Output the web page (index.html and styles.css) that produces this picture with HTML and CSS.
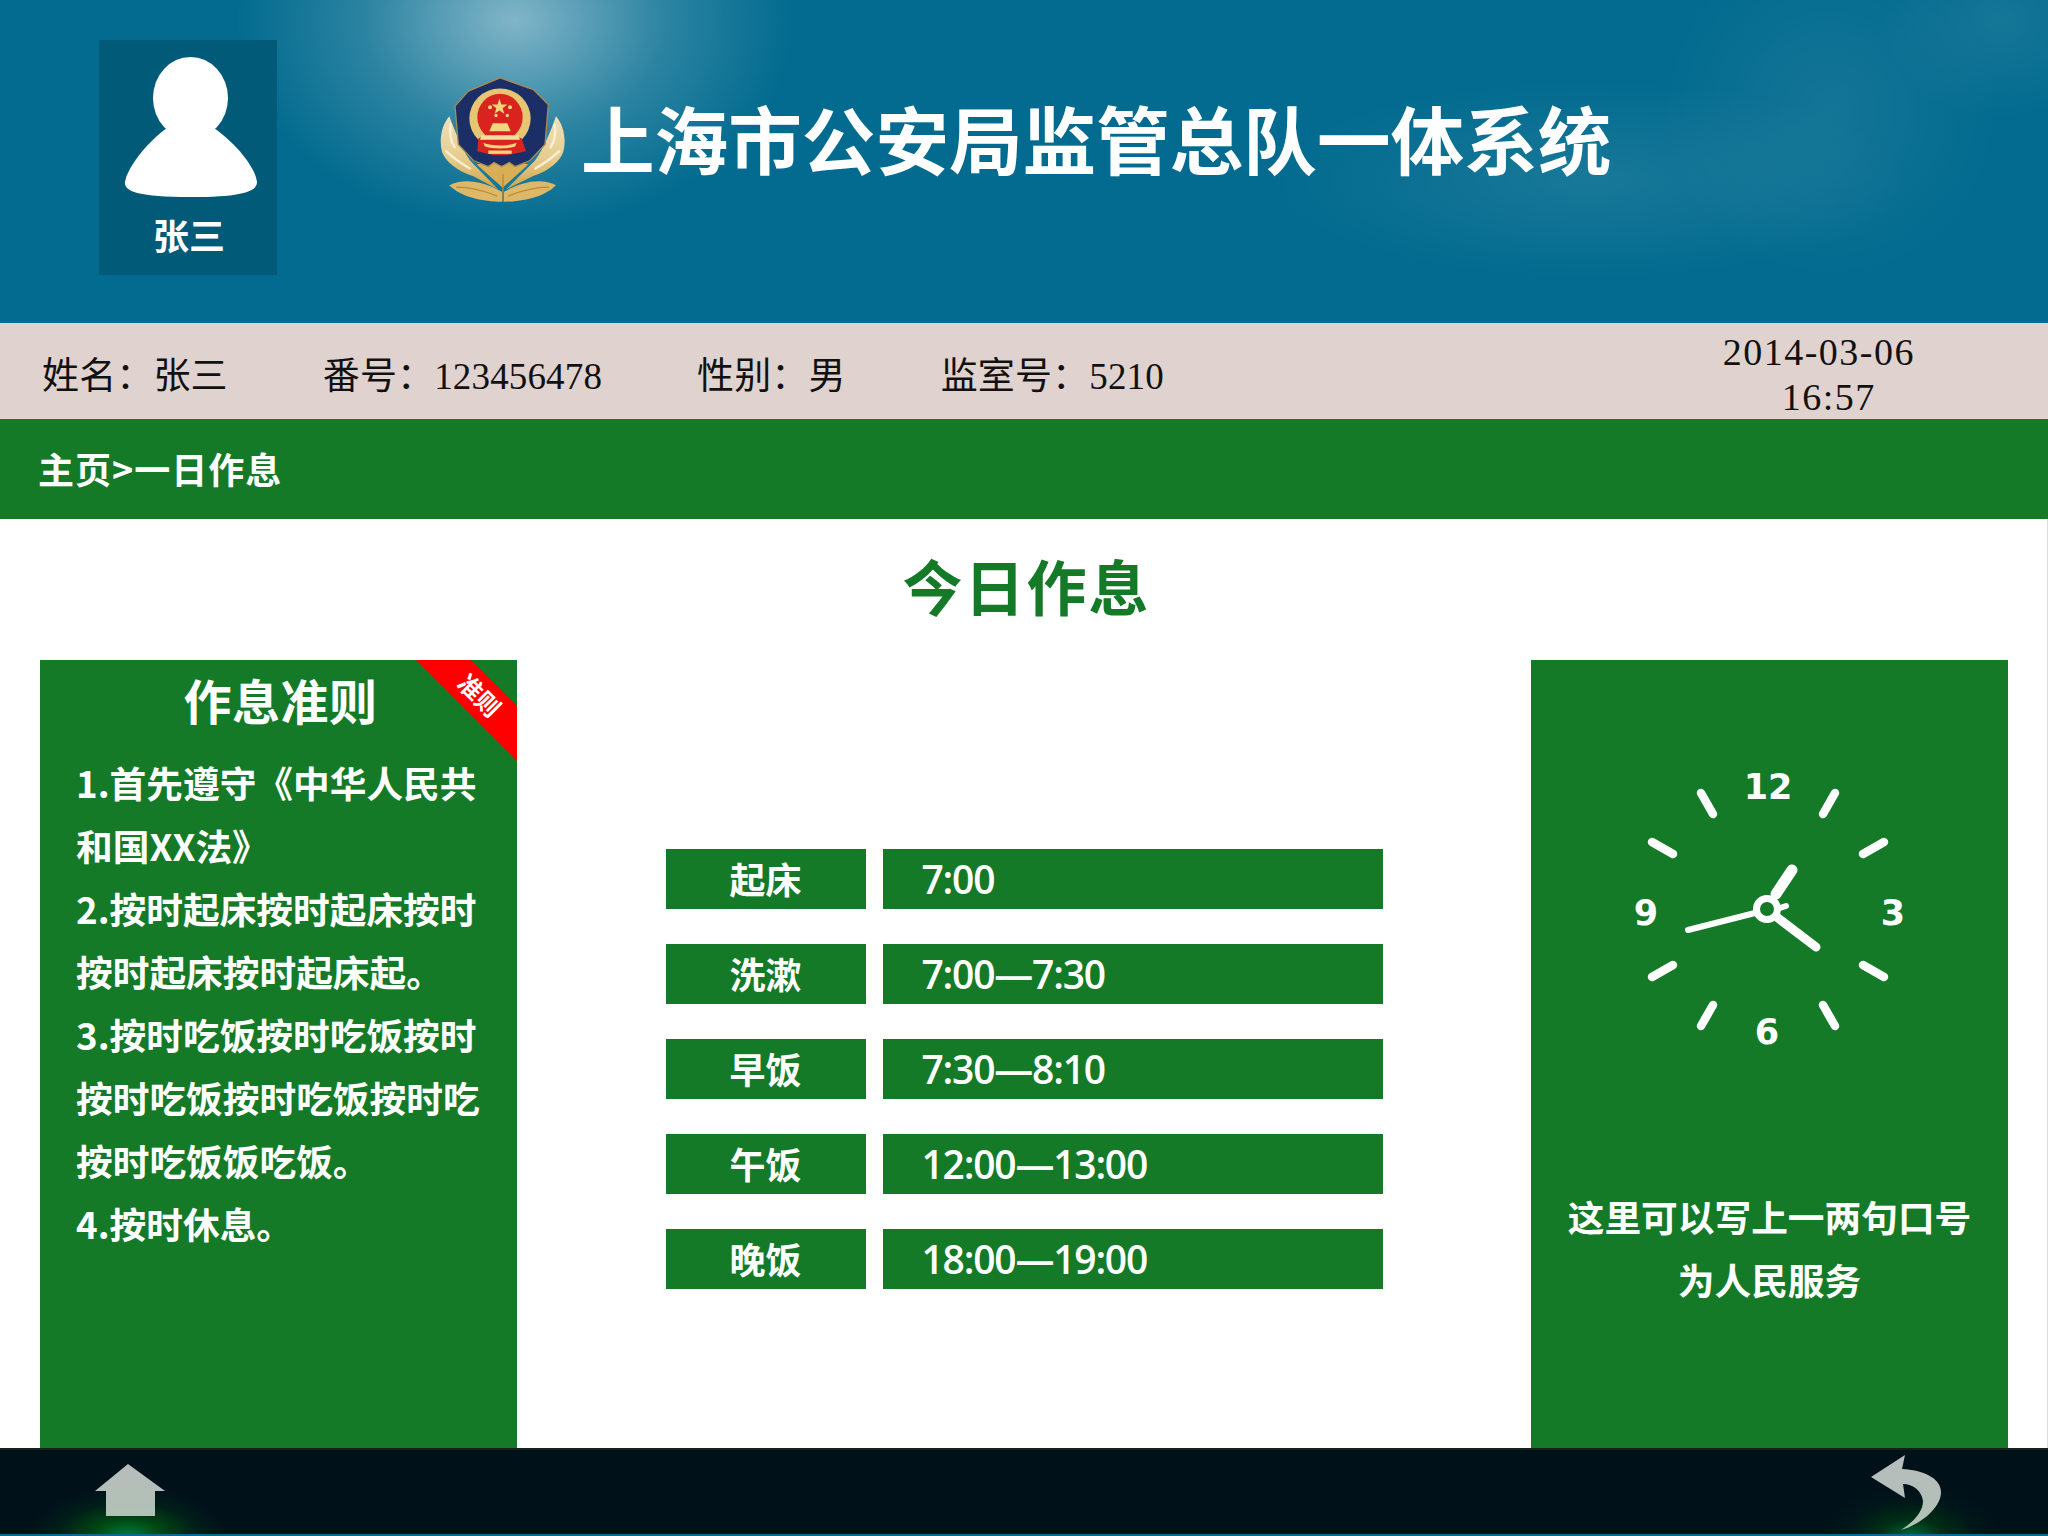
FILE: index.html
```html
<!DOCTYPE html>
<html>
<head>
<meta charset="utf-8">
<title>上海市公安局监管总队一体系统</title>
<link rel="stylesheet" href="styles.css">
</head>
<body>
<div class="page">
	<div class="header">
		<div class="avatar">
			<svg class="avatar-pic" viewBox="0 0 178 160">
				<ellipse cx="91.5" cy="58" rx="37.5" ry="41" fill="#fff"/>
				<path d="M68 88C48 102 28 128 26 142C25 151 38 157 91 157C145 157 158 151 158 142C156 126 135 102 115 88Z" fill="#fff"/>
			</svg>
			<div class="avatar-name">张三</div>
		</div>
		<svg class="badge" viewBox="60 45 375 380">
			<defs>
				<linearGradient id="gold" x1="0" y1="0" x2="0" y2="1">
					<stop offset="0" stop-color="#f0e2bc"/>
					<stop offset="0.6" stop-color="#e6cb8a"/>
					<stop offset="1" stop-color="#cfa148"/>
				</linearGradient>
			</defs>
			<path d="M88 165C66 190 56 232 66 272C74 298 110 330 160 345L235 385L150 298C125 260 105 210 88 165Z" fill="url(#gold)"/>
			<path d="M408 165C430 190 440 232 430 272C422 298 388 330 338 345L258 385L345 298C372 260 392 210 408 165Z" fill="url(#gold)"/>
			<path d="M88 372C130 350 190 360 246 392L246 422C190 420 125 410 88 372Z" fill="#dcb868"/>
			<path d="M408 372C366 350 306 360 252 392L252 422C306 420 371 410 408 372Z" fill="#dcb868"/>
			<path d="M170 310L210 300L245 295L285 300L325 310L248 380Z" fill="#d8ae56"/>
			<g stroke="#f8f0d8" stroke-width="7" stroke-linecap="round" fill="none">
				<path d="M92 190C88 215 92 240 104 258"/>
				<path d="M78 270C100 290 125 308 150 322"/>
				<path d="M404 190C408 215 404 240 392 258"/>
				<path d="M418 270C396 290 371 308 346 322"/>
			</g>
			<g stroke="#b98c36" stroke-width="4" stroke-linecap="round" fill="none">
				<path d="M110 378C150 378 190 388 230 404"/>
				<path d="M386 378C346 378 306 388 266 404"/>
				<path d="M249 340V420"/>
			</g>
			<path d="M240 50L340 85L385 130L375 250L330 298L285 316L268 304L245 316L222 304L205 316L160 298L115 250L105 135L145 90Z" fill="#1b2f66" stroke="#a98a55" stroke-width="4"/>
			<ellipse cx="240" cy="172" rx="92" ry="90" fill="#e6c673"/>
			<ellipse cx="240" cy="168" rx="68" ry="70" fill="#d8231f"/>
			<path d="M175 232L205 218H275L305 232L318 270L260 282H220L172 270Z" fill="#d8231f"/>
			<path d="M238 112L244 130L262 130L248 141L253 158L238 148L224 158L229 141L215 130L233 130Z" fill="#f0d67e"/>
			<circle cx="210" cy="138" r="6" fill="#f0d67e"/>
			<circle cx="270" cy="138" r="6" fill="#f0d67e"/>
			<circle cx="228" cy="163" r="5" fill="#f0d67e"/>
			<circle cx="262" cy="163" r="5" fill="#f0d67e"/>
			<path d="M218 186H262L272 210H208Z" fill="#f0d67e"/>
			<path d="M185 222H295L300 236H180Z" fill="#f0e0a0"/>
			<path d="M190 245C215 256 265 256 290 245L286 255C265 264 215 264 194 255Z" fill="#f0d67e"/>
			<path d="M205 268H275V278H205Z" fill="#f0d67e"/>
		</svg>
		<h1 class="site-title">上海市公安局监管总队一体系统</h1>
	</div>

	<div class="info">
		<span class="info-item">姓名：张三</span>
		<span class="info-item">番号：123456478</span>
		<span class="info-item">性别：男</span>
		<span class="info-item">监室号：5210</span>
		<div class="datetime">
			<div>2014-03-06</div>
			<div class="time">16:57</div>
		</div>
	</div>

	<div class="crumb">主页&gt;一日作息</div>

	<div class="main">
		<h2 class="main-title">今日作息</h2>
		<div class="columns">
			<div class="panel rules">
				<div class="ribbon"><span>准则</span></div>
				<h3 class="rules-title">作息准则</h3>
				<p>1.首先遵守《中华人民共和国XX法》</p>
				<p>2.按时起床按时起床按时按时起床按时起床起。</p>
				<p>3.按时吃饭按时吃饭按时按时吃饭按时吃饭按时吃按时吃饭饭吃饭。</p>
				<p>4.按时休息。</p>
			</div>

			<div class="schedule">
				<div class="row"><div class="row-name">起床</div><div class="row-time">7:00</div></div>
				<div class="row"><div class="row-name">洗漱</div><div class="row-time">7:00—7:30</div></div>
				<div class="row"><div class="row-name">早饭</div><div class="row-time">7:30—8:10</div></div>
				<div class="row"><div class="row-name">午饭</div><div class="row-time">12:00—13:00</div></div>
				<div class="row"><div class="row-name">晚饭</div><div class="row-time">18:00—19:00</div></div>
			</div>

			<div class="panel slogan">
				<svg class="clock" viewBox="0 0 400 340">
					<g stroke="#fff" stroke-width="8.5" stroke-linecap="round">
						<line x1="243" y1="74" x2="255" y2="53"/>
						<line x1="283" y1="114" x2="304" y2="102"/>
						<line x1="283" y1="225" x2="304" y2="237"/>
						<line x1="243" y1="265" x2="255" y2="286"/>
						<line x1="133" y1="265" x2="121" y2="286"/>
						<line x1="93" y1="225" x2="72" y2="237"/>
						<line x1="93" y1="114" x2="72" y2="102"/>
						<line x1="133" y1="74" x2="121" y2="53"/>
					</g>
					<g fill="#fff" class="clock-num" text-anchor="middle">
						<text x="188" y="59">12</text>
						<text x="313" y="185">3</text>
						<text x="187" y="304">6</text>
						<text x="66" y="185">9</text>
					</g>
					<g stroke="#fff" stroke-linecap="round">
						<line x1="196" y1="154" x2="212" y2="130" stroke-width="11"/>
						<line x1="198" y1="178" x2="236" y2="207" stroke-width="9"/>
						<line x1="175" y1="173" x2="108" y2="190" stroke-width="6"/>
						<line x1="200" y1="168" x2="206" y2="166" stroke-width="6"/>
					</g>
					<circle cx="187" cy="169" r="10.5" fill="#147a28" stroke="#fff" stroke-width="7"/>
				</svg>
				<p>这里可以写上一两句口号</p>
				<p>为人民服务</p>
			</div>
		</div>
	</div>

	<div class="footer">
		<svg class="home-icon" viewBox="0 0 70 52">
			<defs>
				<linearGradient id="iconfill" x1="0" y1="0" x2="0" y2="1">
					<stop offset="0" stop-color="#b7bcbc"/>
					<stop offset="1" stop-color="#b0c2b6"/>
				</linearGradient>
			</defs>
			<path d="M33 0L70 27H60V52H11V27H0Z" fill="url(#iconfill)"/>
		</svg>
		<svg class="back-icon" viewBox="0 0 70 75">
			<path d="M0 22L34 0L31 14C52 15 70 23 70 37C70 53 50 69 30 75C44 66 52 56 52 46C51 36 42 29 32 29L34 43Z" fill="url(#iconfill)"/>
		</svg>
	</div>
</div>
</body>
</html>
```

FILE: styles.css
```css
*{
	margin: 0;
	padding: 0;
	box-sizing: border-box;
}
body{
	width: 2048px;
	height: 1536px;
	overflow: hidden;
	background-color: #fff;
	font-family: "Noto Sans CJK SC", sans-serif;
}
.page{
	display: flex;
	flex-direction: column;
	height: 1536px;
}

.header{
	display: flex;
	align-items: flex-start;
	height: 323px;
	padding: 40px 0 0 99px;
	background-color: #026b8f;
	background-image:
		radial-gradient(ellipse 280px 210px at 515px 20px, rgba(255,255,255,.5), rgba(255,255,255,.16) 55%, rgba(255,255,255,0)),
		radial-gradient(ellipse 320px 100px at 1590px 180px, rgba(255,255,255,.09), rgba(255,255,255,0)),
		radial-gradient(ellipse 170px 170px at 1830px 110px, rgba(255,255,255,.07), rgba(255,255,255,0)),
		radial-gradient(ellipse 120px 100px at 2000px 20px, rgba(255,255,255,.08), rgba(255,255,255,0));
}
.avatar{
	width: 178px;
	height: 235px;
	background-color: #005a78;
}
.avatar-pic{
	display: block;
	width: 178px;
	height: 160px;
}
.avatar-name{
	height: 72px;
	padding-left: 2px;
	line-height: 68px;
	text-align: center;
	font-size: 36px;
	font-weight: 700;
	color: #fff;
}
.badge{
	width: 125px;
	height: 127px;
	margin: 36px 0 0 163px;
	filter: blur(.4px);
}
.site-title{
	margin: 51px 0 0 16px;
	line-height: 92px;
	font-size: 73.6px;
	font-weight: 700;
	color: #fff;
	white-space: nowrap;
}

.info{
	display: flex;
	align-items: center;
	gap: 95px;
	height: 96px;
	padding: 3px 133px 0 42px;
	background-color: #e0d3cf;
	font-family: "Liberation Serif", "Noto Sans CJK SC", serif;
	font-size: 37px;
	letter-spacing: .15px;
	color: #111;
}
.datetime{
	margin-left: auto;
	margin-top: 5px;
	line-height: 45px;
	font-size: 38px;
	letter-spacing: 1.5px;
	text-align: center;
}
.time{
	padding-left: 20px;
}

.crumb{
	height: 100px;
	padding-left: 38px;
	line-height: 98px;
	background-color: #147a28;
	font-size: 36px;
	letter-spacing: 1px;
	font-weight: 700;
	color: #fff;
}

.main{
	display: flex;
	flex-direction: column;
	flex: 1;
	min-height: 0;
	border-right: 1px solid #ddd;
}
.main-title{
	height: 141px;
	padding-left: 6px;
	line-height: 131px;
	text-align: center;
	font-size: 60px;
	letter-spacing: 2px;
	font-weight: 700;
	color: #147a28;
}
.columns{
	display: flex;
	justify-content: space-between;
	flex: 1;
	padding: 0 39px 0 40px;
}
.panel{
	position: relative;
	width: 477px;
	overflow: hidden;
	background-color: #147a28;
	color: #fff;
	font-size: 36.7px;
	font-weight: 700;
	line-height: 63px;
}

.rules{
	padding: 0 27px 0 36px;
}
.rules-title{
	height: 91px;
	margin-left: -32px;
	margin-right: -27px;
	line-height: 78px;
	text-align: center;
	font-size: 48px;
	letter-spacing: .5px;
	font-weight: 700;
}
.ribbon{
	position: absolute;
	top: 0;
	right: 0;
	width: 101px;
	height: 101px;
	background-color: #f00;
	clip-path: polygon(0 0, 55px 0, 100% 46px, 100% 100%);
}
.ribbon span{
	position: absolute;
	left: 32px;
	top: 17px;
	width: 64px;
	line-height: 36px;
	text-align: center;
	font-size: 24px;
	font-weight: 700;
	transform: rotate(45deg);
}

.schedule{
	display: flex;
	flex-direction: column;
	gap: 35px;
	padding-top: 189px;
}
.row{
	display: flex;
	gap: 17px;
	height: 60px;
}
.row-name, .row-time{
	background-color: #147a28;
	color: #fff;
}
.row-name{
	width: 200px;
	line-height: 58px;
	text-align: center;
	font-size: 36px;
	font-weight: 700;
}
.row-time{
	width: 500px;
	padding-left: 39px;
	line-height: 60px;
	font-family: "Open Sans", "Noto Sans CJK SC", sans-serif;
	font-size: 39px;
	letter-spacing: -1.2px;
	font-weight: 600;
}

.slogan{
	text-align: center;
}
.clock{
	display: block;
	width: 400px;
	height: 340px;
	margin: 80px 0 105px 49px;
}
.clock-num{
	font-family: "DejaVu Sans", sans-serif;
	font-size: 35px;
	font-weight: 700;
}

.footer{
	display: flex;
	justify-content: space-between;
	flex: none;
	height: 88px;
	padding: 0 107px 0 95px;
	border-top: 2px solid #15201f;
	border-bottom: 2px solid #0a6a8e;
	background-color: #00111a;
	background-image:
		radial-gradient(ellipse 100px 48px at 128px 86px, rgba(0,130,60,.95), rgba(0,85,15,.8) 35%, rgba(0,60,20,.3) 70%, rgba(0,40,20,0)),
		radial-gradient(ellipse 90px 48px at 1911px 86px, rgba(0,120,55,.85), rgba(0,70,15,.55) 35%, rgba(0,50,20,.2) 70%, rgba(0,40,20,0));
}
.home-icon{
	width: 70px;
	height: 52px;
	margin-top: 14px;
}
.back-icon{
	width: 70px;
	height: 75px;
	margin-top: 5px;
}
```
